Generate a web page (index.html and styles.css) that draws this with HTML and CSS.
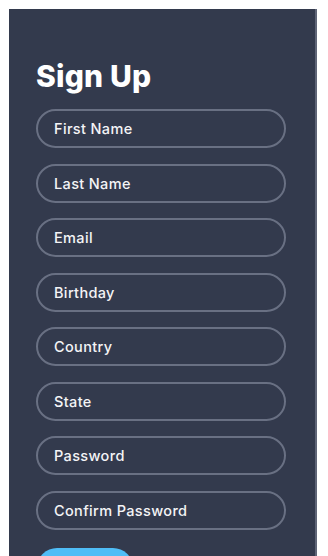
FILE: index.html
```html
<!DOCTYPE html>
<html lang="en">
<head>
<meta charset="utf-8">
<title>Sign Up</title>
<link rel="stylesheet" href="styles.css">
</head>
<body>
<main class="panel">
  <h1 class="title">Sign Up</h1>
  <form class="form">
    <input class="field" type="text" placeholder="First Name">
    <input class="field" type="text" placeholder="Last Name">
    <input class="field" type="email" placeholder="Email">
    <input class="field" type="text" placeholder="Birthday">
    <input class="field" type="text" placeholder="Country">
    <input class="field" type="text" placeholder="State">
    <input class="field" type="password" placeholder="Password">
    <input class="field" type="password" placeholder="Confirm Password">
    <button class="submit" type="button">Sign Up</button>
  </form>
</main>
</body>
</html>
```
FILE: styles.css
```css
html, body {
  margin: 0;
  padding: 0;
  background: #ffffff;
  height: 100%;
  overflow: hidden;
}
body {
  font-family: "Inter", "Noto Sans", sans-serif;
}
.panel {
  margin: 9px 0 0 9px;
  width: 308px;
  min-height: 620px;
  box-sizing: border-box;
  background: #333a4d;
  border-right: 2px solid #5f6577;
  padding: 49px 0 0 27px;
}
.title {
  margin: 0 0 15px 0;
  color: #ffffff;
  font-size: 30px;
  font-weight: 800;
  line-height: 36px;
  letter-spacing: 0.2px;
}
.form {
  display: flex;
  flex-direction: column;
  gap: 15.5px;
  align-items: flex-start;
}
.field {
  width: 250px;
  height: 39px;
  box-sizing: border-box;
  border: 2px solid #697083;
  border-radius: 20px;
  background: transparent;
  padding: 0 0 0 16px;
  font-family: "Inter", "Noto Sans", sans-serif;
  font-size: 14.5px;
  font-weight: 500;
  letter-spacing: 0.35px;
  color: #f4f4f6;
  outline: none;
}
.field::placeholder {
  color: #f4f4f6;
  opacity: 1;
}
.submit {
  margin-top: 3px;
  margin-left: 1px;
  width: 96px;
  height: 52px;
  border: none;
  border-radius: 20px;
  background: #4fbdf6;
  color: #ffffff;
  font-family: "Inter", "Noto Sans", sans-serif;
  font-size: 15px;
  font-weight: 600;
}
```
